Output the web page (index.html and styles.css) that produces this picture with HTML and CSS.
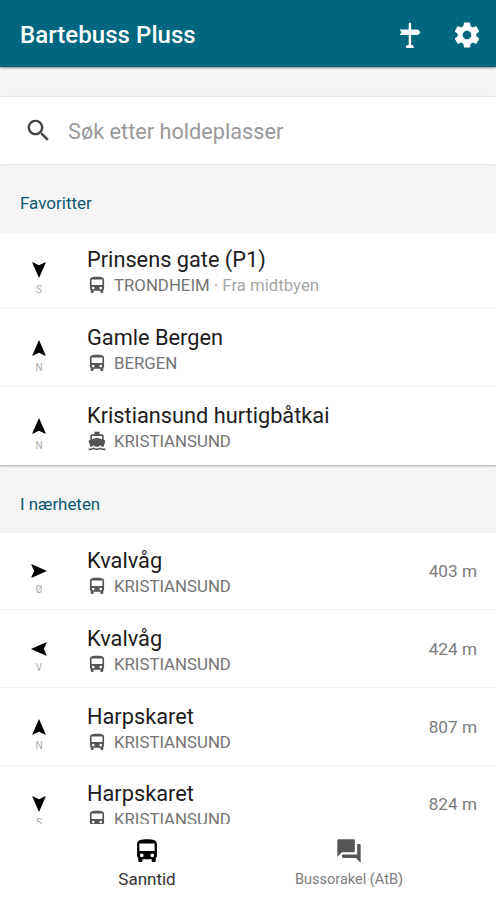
FILE: index.html
```html
<!DOCTYPE html>
<html lang="no">
<head>
<meta charset="utf-8">
<title>Bartebuss Pluss</title>
<link rel="stylesheet" href="styles.css">
</head>
<body>
<svg class="defs" aria-hidden="true">
  <symbol id="bus" viewBox="0 0 24 24"><path d="M3.500 16c0 .88.39 1.670 1 2.220V20.500c0 .55.45 1 1 1H7c.55 0 1-.45 1-1V19h8v1.500c0 .55.45 1 1 1h1.500c.55 0 1-.45 1-1v-2.280c.61-.55 1-1.340 1-2.220V6c0-3.500-3.800-4-8.500-4s-8.500.5-8.500 4zM7.500 17.300a1.600 1.600 0 1 1 0-3.200 1.600 1.600 0 0 1 0 3.200zm9 0a1.600 1.600 0 1 1 0-3.200 1.600 1.600 0 0 1 0 3.200zM18.500 12h-13V5.500h13z"/></symbol>
  <symbol id="boat" viewBox="0 0 24 24"><path d="M20 21c-1.390 0-2.780-.47-4-1.320-2.440 1.710-5.560 1.710-8 0C6.780 20.530 5.390 21 4 21H2v2h2c1.380 0 2.740-.35 4-.99 2.520 1.290 5.480 1.290 8 0 1.260.65 2.620.99 4 .99h2v-2h-2zM3.950 19H4c1.600 0 3.020-.88 4-2 .98 1.120 2.400 2 4 2s3.020-.88 4-2c.98 1.120 2.400 2 4 2h.05l1.890-6.680c.08-.26.06-.54-.06-.78s-.34-.42-.6-.5L20 10.620V6c0-1.100-.9-2-2-2h-3V1H9v3H6c-1.100 0-2 .9-2 2v4.620l-1.290.42c-.26.08-.48.26-.6.5s-.15.52-.06.78L3.950 19zM6 6h12v3.970L12 8 6 9.970V6z"/></symbol>
  <symbol id="arrow" viewBox="0 0 16 16"><path d="M8 0L1.300 15.200 1.700 15.700 8 12.800 14.300 15.700 14.700 15.200z"/></symbol>
</svg>
<div class="app">
  <header class="topbar">
    <h1>Bartebuss Pluss</h1>
    <svg class="sign" viewBox="0 0 22 26"><path d="M9.700 1.500Q10.900-.5 12.100 1.500V7.500H19l2.500 2.700L19 13h-6.900V23h1.700l1 1.500V26H7v-1.500L8 23h1.700V13H.8l1.500-2.800L.8 7.500h8.900z"/></svg>
    <svg class="gear" viewBox="0 0 24 24"><path d="M19.430 12.980c.04-.32.07-.64.07-.98s-.03-.66-.07-.98l2.110-1.650c.19-.15.24-.42.12-.64l-2-3.460c-.12-.22-.39-.3-.61-.22l-2.490 1c-.52-.4-1.080-.73-1.690-.98l-.38-2.650C14.460 2.180 14.250 2 14 2h-4c-.25 0-.46.18-.49.42l-.38 2.650c-.61.25-1.170.59-1.690.98l-2.490-1c-.23-.09-.49 0-.61.22l-2 3.460c-.13.22-.07.49.12.64l2.110 1.650c-.04.32-.07.65-.07.98s.03.66.07.98l-2.110 1.650c-.19.15-.24.42-.12.64l2 3.460c.12.22.39.3.61.22l2.490-1c.52.4 1.080.73 1.690.98l.38 2.650c.03.24.24.42.49.42h4c.25 0 .46-.18.49-.42l.38-2.650c.61-.25 1.170-.59 1.690-.98l2.490 1c.23.09.49 0 .61-.22l2-3.460c.12-.22.07-.49-.12-.64l-2.110-1.650zM12 15.500c-1.930 0-3.500-1.570-3.500-3.500s1.570-3.500 3.500-3.500 3.500 1.570 3.500 3.500-1.570 3.500-3.500 3.500z"/></svg>
  </header>
  <div class="search">
    <svg viewBox="0 0 24 24"><path d="M15.500 14h-.79l-.28-.27C15.410 12.590 16 11.110 16 9.500 16 5.910 13.090 3 9.500 3S3 5.910 3 9.500 5.910 16 9.500 16c1.610 0 3.090-.59 4.230-1.570l.27.28v.79l5 4.990L20.490 19l-4.990-5zm-6 0C7.010 14 5 11.990 5 9.500S7.010 5 9.500 5 14 7.010 14 9.500 11.990 14 9.500 14z"/></svg>
    <span>Søk etter holdeplasser</span>
  </div>
  <h2>Favoritter</h2>
  <ul class="list favorites">
    <li><div class="dir"><svg class="south"><use href="#arrow"/></svg><small>S</small></div>
      <div class="stop"><b>Prinsens gate (P1)</b><p><svg><use href="#bus"/></svg><span>TRONDHEIM <i>· Fra midtbyen</i></span></p></div></li>
    <li><div class="dir"><svg><use href="#arrow"/></svg><small>N</small></div>
      <div class="stop"><b>Gamle Bergen</b><p><svg><use href="#bus"/></svg><span>BERGEN</span></p></div></li>
    <li><div class="dir"><svg><use href="#arrow"/></svg><small>N</small></div>
      <div class="stop"><b>Kristiansund hurtigbåtkai</b><p><svg><use href="#boat"/></svg><span>KRISTIANSUND</span></p></div></li>
  </ul>
  <h2 class="near">I nærheten</h2>
  <ul class="list nearby">
    <li><div class="dir"><svg class="east"><use href="#arrow"/></svg><small>Ø</small></div>
      <div class="stop"><b>Kvalvåg</b><p><svg><use href="#bus"/></svg><span>KRISTIANSUND</span></p></div><em>403 m</em></li>
    <li><div class="dir"><svg class="west"><use href="#arrow"/></svg><small>V</small></div>
      <div class="stop"><b>Kvalvåg</b><p><svg><use href="#bus"/></svg><span>KRISTIANSUND</span></p></div><em>424 m</em></li>
    <li><div class="dir"><svg><use href="#arrow"/></svg><small>N</small></div>
      <div class="stop"><b>Harpskaret</b><p><svg><use href="#bus"/></svg><span>KRISTIANSUND</span></p></div><em>807 m</em></li>
    <li><div class="dir"><svg class="south"><use href="#arrow"/></svg><small>S</small></div>
      <div class="stop"><b>Harpskaret</b><p><svg><use href="#bus"/></svg><span>KRISTIANSUND</span></p></div><em>824 m</em></li>
  </ul>
  <nav>
    <a class="active"><svg viewBox="0 0 24 24"><use href="#bus"/></svg><span>Sanntid</span></a>
    <a><svg viewBox="0 0 24 24"><path d="M21 6h-2v9H6v2c0 .55.45 1 1 1h11l4 4V7c0-.55-.45-1-1-1zm-4 6V3c0-.55-.45-1-1-1H3c-.55 0-1 .45-1 1v14l4-4h10c.55 0 1-.45 1-1z"/></svg><span>Bussorakel (AtB)</span></a>
  </nav>
</div>
</body>
</html>
```
FILE: styles.css
```css
* { box-sizing: border-box; margin: 0; padding: 0; }
body { font-family: Roboto, "Liberation Sans", sans-serif; background: #f4f4f4; color: #1c1c1c; }
svg { display: block; flex: none; fill: currentColor; }
.defs { display: none; }
.app { height: 900px; display: flex; flex-direction: column; overflow: hidden; }

.topbar { height: 67px; flex: none; display: flex; align-items: center; padding: 3px 14px 0 20px; background: #00677f; color: #fff; box-shadow: 0 1px 2px rgba(0, 0, 0, .45); }
.topbar h1 { flex: 1; font-size: 24px; font-weight: 500; line-height: 30px; letter-spacing: .05px; }
.sign { width: 22px; height: 26px; margin-right: 31px; }
.gear { width: 30px; height: 30px; }

.search { height: 67px; flex: none; margin-top: 30px; display: flex; align-items: center; padding: 2px 24px 0; background: #fff; box-shadow: 0 0 2px rgba(0, 0, 0, .16); }
.search svg { width: 29px; height: 29px; margin-bottom: 2px; color: #444; }
.search span { margin-left: 15px; font-size: 21.700px; color: #999; }

h2 { height: 69px; flex: none; padding: 10px 20px 0; font-size: 17px; font-weight: 400; line-height: 59px; color: #0b5873; }
h2.near { height: 68px; font-size: 16.900px; }

.list { list-style: none; background: #fff; }
.favorites { height: 232px; flex: none; box-shadow: 0 1px 2px rgba(0, 0, 0, .3); }
.nearby { flex: 1; min-height: 0; overflow: hidden; }
.list li { height: 77.8px; display: flex; padding: 0 19px 0 0; background: linear-gradient(#f4f4f4, #f4f4f4) 0 75px / 100% 1px no-repeat; }
.nearby li { background-position-y: 76px; }
.list li:last-child { background: none; }
.dir { width: 78px; margin-right: 9px; padding-top: 29px; display: flex; flex-direction: column; align-items: center; color: #000; }
.dir svg { width: 16px; height: 16px; }
.dir small { margin-top: 6px; font-size: 10px; line-height: 12px; color: #aaa; }
.nearby .dir { padding-top: 30px; }
.nearby .dir small { margin-top: 5px; }
.south { transform: rotate(180deg); }
.east { transform: rotate(90deg); }
.west { transform: rotate(-90deg); }
.stop { flex: 1; padding-top: 13.400px; }
.nearby .stop { padding-top: 14px; }
.stop b { display: block; font-size: 21.750px; font-weight: 400; line-height: 28px; }
.stop p { display: flex; align-items: center; height: 22px; font-size: 16.800px; color: #747474; }
.stop p svg { width: 20px; height: 20px; color: #555; }
.stop p span { margin-left: 7px; }
.stop i { font-style: normal; color: #a6a6a6; }
.list em { font-style: normal; font-size: 17.200px; line-height: 77px; color: #7b7b7b; }

nav { height: 76px; flex: none; display: flex; padding: 0 46px; background: #fff; }
nav a { flex: 1; display: flex; flex-direction: column; align-items: center; padding-top: 13px; color: #555; }
nav svg { width: 28px; height: 28px; }
nav span { margin-top: 5px; font-size: 14.500px; line-height: 20px; color: #7c7c7c; }
nav .active { color: #000; }
nav .active span { font-size: 17px; line-height: 19px; color: #333; }
```
